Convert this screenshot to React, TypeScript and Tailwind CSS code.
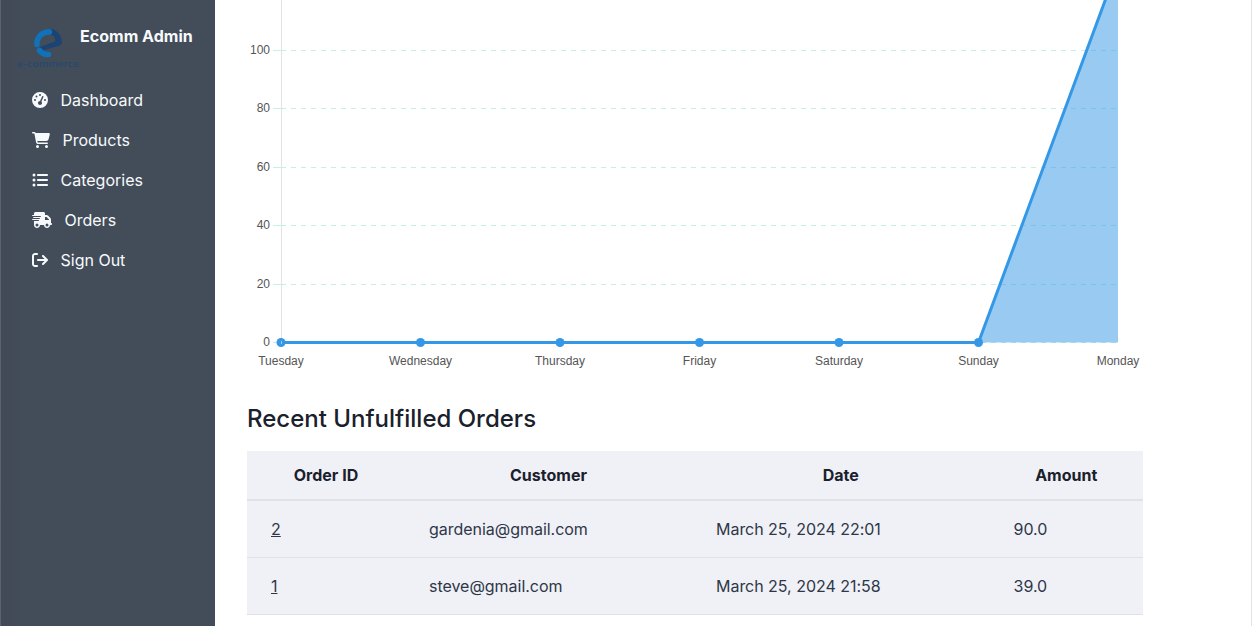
import type { IconType } from "react-icons";
import {
  FaArrowRightFromBracket,
  FaCartShopping,
  FaGaugeHigh,
  FaListUl,
  FaTruckFast,
} from "react-icons/fa6";

const links: { label: string; icon: IconType; iconClass: string }[] = [
  { label: "Dashboard", icon: FaGaugeHigh, iconClass: "h-4 w-4" },
  { label: "Products", icon: FaCartShopping, iconClass: "h-4 w-[18px]" },
  { label: "Categories", icon: FaListUl, iconClass: "h-4 w-4" },
  { label: "Orders", icon: FaTruckFast, iconClass: "h-4 w-5" },
  { label: "Sign Out", icon: FaArrowRightFromBracket, iconClass: "h-4 w-4" },
];

const orders = [
  { id: 2, customer: "gardenia@gmail.com", date: "March 25, 2024 22:01", amount: "90.0" },
  { id: 1, customer: "steve@gmail.com", date: "March 25, 2024 21:58", amount: "39.0" },
];

const days = ["Tuesday", "Wednesday", "Thursday", "Friday", "Saturday", "Sunday", "Monday"];
const ticks = [
  { value: 100, y: 50.5 },
  { value: 80, y: 108.5 },
  { value: 60, y: 167.5 },
  { value: 40, y: 225.5 },
  { value: 20, y: 284.5 },
  { value: 0, y: 342.5 },
];
const dayX = (i: number) => 34 + i * 139.5;

function Logo() {
  return (
    <svg width="68" height="44" viewBox="0 0 68 44" className="shrink-0">
      <path d="M35 3C42 3 47 9.500 47 17L45 19.500L26 25C24.500 25 23.500 23.500 24 22L25 21L40 15.500C41 12 38.500 9 35 8.500Z" fill="#1b4474" />
      <g fill="none" stroke="#0f72bb" strokeWidth="5.500" strokeLinecap="round">
        <path d="M34.500 6A11.500 11.500 0 0 0 22 18.500" />
        <path d="M24.500 24.500Q28 29 33.500 28.500" />
      </g>
      <text x="2" y="40.5" fontSize="10" textLength="62" lengthAdjust="spacingAndGlyphs" fill="#1f4873" fontFamily="Lato, sans-serif">
        e-commerce
      </text>
    </svg>
  );
}

function RevenueChart() {
  return (
    <svg width="904" height="376" viewBox="0 0 904 376" className="block shrink-0">
      <path d="M34.5 0V342" stroke="#e2e2e2" />
      {ticks.map(({ value, y }) => (
        <g key={value}>
          <path d={`M26 ${y}H34`} stroke="#c5f0e8" />
          <path d={`M34 ${y}H871`} stroke="#c5f0e8" strokeDasharray="5 5" />
          <text x="23" y={y + 3.5} textAnchor="end" fontSize="12" fill="#555">
            {value}
          </text>
        </g>
      ))}
      <path d="M731.500 342.500L871 -34.200V342.500Z" fill="#3498e6" fillOpacity="0.5" />
      <path d="M34 342.500H731.500L871 -34.200" fill="none" stroke="#3498e6" strokeWidth="3" strokeLinejoin="round" />
      {days.map((day, i) => (
        <g key={day}>
          {i < 6 && <circle cx={dayX(i)} cy="342.500" r="4.500" fill="#3498e6" />}
          <text x={dayX(i)} y="365" textAnchor="middle" fontSize="12" fill="#555">
            {day}
          </text>
        </g>
      ))}
      <path d="M34.500 341V344" stroke="#9bcbf2" />
    </svg>
  );
}

export default function App() {
  return (
    <div className="flex h-[626px] overflow-hidden bg-white font-['Inter',sans-serif] text-base text-[#2d3748]">
      <aside className="w-[215px] shrink-0 border-l border-[#596270] bg-linear-to-r from-[#424957] to-[#434d59] to-[28px] text-[#f7fafc]">
        <div className="flex h-20 pt-[26px] pl-[14px]">
          <Logo />
          <span className="-ml-[3px] -mt-0.5 whitespace-nowrap font-bold leading-6 tracking-[0.03px]">Ecomm Admin</span>
        </div>
        <nav>
          {links.map(({ label, icon: Icon, iconClass }) => (
            <a key={label} className="flex h-10 items-center gap-[12.5px] pl-[31px]">
              <Icon className={iconClass} />
              <span>{label}</span>
            </a>
          ))}
        </nav>
      </aside>
      <main className="mr-px min-w-0 flex-1 border-r border-[#e4e4e7] pl-8">
        <div className="font-['Liberation_Sans',sans-serif]">
          <RevenueChart />
        </div>
        <h2 className="mt-[26px] mb-[15px] text-2xl leading-[34px] font-medium text-[#1a202c]">Recent Unfulfilled Orders</h2>
        <table className="w-[896px] table-fixed border-separate border-spacing-0 bg-[#f0f1f6]">
          <colgroup>
            <col className="w-[158px]" />
            <col className="w-[287px]" />
            <col className="w-[297.500px]" />
            <col className="w-[153.500px]" />
          </colgroup>
          <thead>
            <tr className="h-[50px] text-[#1a202c]">
              {["Order ID", "Customer", "Date", "Amount"].map((name) => (
                <th key={name} className="border-b-2 border-[#e0e2e8] px-6 py-0 font-bold">{name}</th>
              ))}
            </tr>
          </thead>
          <tbody className="[&_td]:border-b [&_td]:border-[#e0e2e8] [&_td]:px-6">
            {orders.map((order) => (
              <tr key={order.id} className="h-[57px]">
                <td><a className="underline">{order.id}</a></td>
                <td className="tracking-[-0.03px]">{order.customer}</td>
                <td className="tracking-[-0.03px]">{order.date}</td>
                <td>{order.amount}</td>
              </tr>
            ))}
          </tbody>
        </table>
      </main>
    </div>
  );
}
